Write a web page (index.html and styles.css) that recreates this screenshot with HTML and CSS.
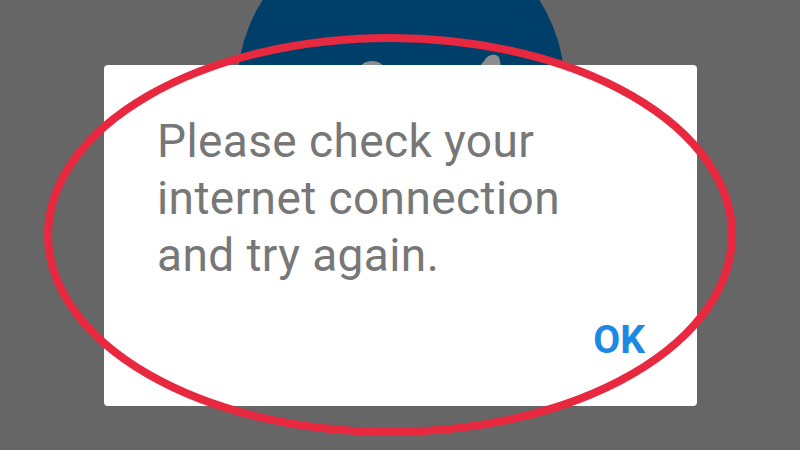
FILE: index.html
```html
<!DOCTYPE html>
<html lang="en">
<head>
<meta charset="utf-8">
<title>No connection</title>
<link rel="stylesheet" href="styles.css">
</head>
<body>
<svg class="backdrop-logo" width="800" height="450" viewBox="0 0 800 450" aria-hidden="true">
  <circle cx="401" cy="88" r="164" fill="#003f6a"/>
  <ellipse cx="372" cy="67" rx="11" ry="6" fill="#8d8d8d"/>
  <path d="M480 66 L487 57 Q494 52 499 57 L501 66 Z" fill="#8d8d8d"/>
</svg>
<div class="dialog">
  <p class="message">Please check your<br>internet connection<br>and try again.</p>
  <div class="actions"><span class="btn">OK</span></div>
</div>
<svg class="annotation" width="800" height="450" viewBox="0 0 800 450" aria-hidden="true">
  <ellipse cx="390" cy="235" rx="342" ry="197" fill="none" stroke="#e8283f" stroke-width="8"/>
</svg>
</body>
</html>
```
FILE: styles.css
```css
html, body {
  margin: 0;
  padding: 0;
}
body {
  width: 800px;
  height: 450px;
  background: #666666;
  overflow: hidden;
  position: relative;
  font-family: Roboto, "Noto Sans", sans-serif;
  padding-top: 65px;
  box-sizing: border-box;
}
.backdrop-logo {
  position: absolute;
  left: 0;
  top: 0;
  z-index: 0;
}
.annotation {
  position: absolute;
  left: 0;
  top: 0;
  z-index: 2;
}
.dialog {
  position: relative;
  z-index: 1;
  margin-left: 104px;
  width: 593px;
  height: 341px;
  background: #ffffff;
  border-radius: 4px;
  box-sizing: border-box;
  padding: 48px 52px 0 53px;
  display: flex;
  flex-direction: column;
}
.message {
  margin: 0;
  font-size: 46px;
  line-height: 57px;
  letter-spacing: 0.4px;
  color: #777777;
}
.actions {
  display: flex;
  justify-content: flex-end;
  margin-top: 36px;
}
.btn {
  font-size: 39px;
  line-height: 40px;
  font-weight: 700;
  color: #1e88e5;
}
```
